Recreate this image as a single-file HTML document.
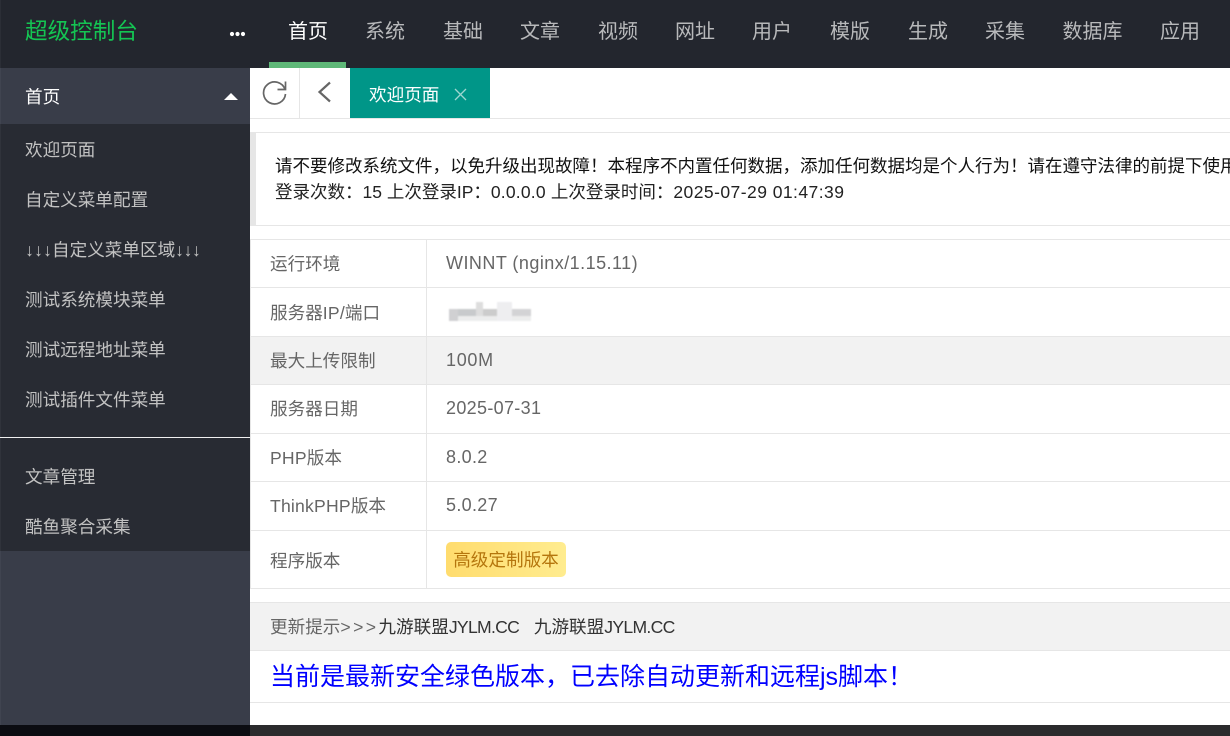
<!DOCTYPE html>
<html lang="zh"><head><meta charset="utf-8"><title>超级控制台</title>
<style>
*{box-sizing:border-box}
html,body{margin:0;padding:0;width:1230px;height:736px;overflow:hidden;background:#fff}
body{position:relative;font-family:"Liberation Sans","Noto Sans CJK SC",sans-serif;font-size:18px}
.a{position:absolute;white-space:nowrap}
.n{top:18px;height:28px;line-height:28px;font-size:20px;color:#b8b9bb;width:62px;text-align:center}
.s{left:25px;font-size:17.6px;line-height:26px;color:#c2c2c2}
.h{position:absolute;background:#e6e6e6;height:1px;left:250px;width:980px}
.k{left:270px;font-size:17.6px;line-height:26px;color:#666}
.v{left:446px;font-size:18px;line-height:26px;color:#666;letter-spacing:.32px}
.w{display:inline-block;text-align:center;font-weight:bold;font-size:17.6px}
.w1{width:9px}
.w2{width:8.4px}
.j{letter-spacing:-.7px}
.t{letter-spacing:.2px}
</style></head><body>
<div class="a" style="left:0;top:0;width:1230px;height:68px;background:#23262e"></div>
<div class="a" style="left:25px;top:15px;font-size:22.6px;line-height:34px;color:#14c553">超级控制台</div>
<svg class="a" style="left:229px;top:31px" width="17" height="6"><circle cx="3" cy="3" r="2.1" fill="#fff"/><circle cx="8.5" cy="3" r="2.1" fill="#fff"/><circle cx="14" cy="3" r="2.1" fill="#fff"/></svg>
<div class="a n" style="left:277px;color:#fff">首页</div>
<div class="a" style="left:269px;top:62px;width:77px;height:6px;background:#5fb878"></div>
<div class="a n" style="left:354px">系统</div>
<div class="a n" style="left:432px">基础</div>
<div class="a n" style="left:509px">文章</div>
<div class="a n" style="left:587px">视频</div>
<div class="a n" style="left:664px">网址</div>
<div class="a n" style="left:741px">用户</div>
<div class="a n" style="left:819px">模版</div>
<div class="a n" style="left:897px">生成</div>
<div class="a n" style="left:974px">采集</div>
<div class="a n" style="left:1062px;width:61px">数据库</div>
<div class="a n" style="left:1149px">应用</div>

<div class="a" style="left:0;top:68px;width:250px;height:657px;background:#393d49"></div>
<div class="a" style="left:0;top:124px;width:250px;height:427px;background:#282b33"></div>
<div class="a" style="left:0;top:0;width:1px;height:725px;background:rgba(255,255,255,.04)"></div>
<div class="a" style="left:25px;top:84px;font-size:17.6px;line-height:26px;color:#fff">首页</div>
<div class="a" style="left:224px;top:93px;width:0;height:0;border-left:7px solid transparent;border-right:7px solid transparent;border-bottom:7px solid #fff"></div>
<div class="a s" style="top:137px">欢迎页面</div>
<div class="a s" style="top:187px">自定义菜单配置</div>
<div class="a s" style="top:237px"><span class="w w1">↓</span><span class="w w1">↓</span><span class="w w1">↓</span>自定义菜单区域<span class="w w2">↓</span><span class="w w2">↓</span><span class="w w2">↓</span></div>
<div class="a s" style="top:287px">测试系统模块菜单</div>
<div class="a s" style="top:337px">测试远程地址菜单</div>
<div class="a s" style="top:387px">测试插件文件菜单</div>
<div class="a" style="left:0;top:437px;width:250px;height:1px;background:#f0f0f0"></div>
<div class="a s" style="top:464px">文章管理</div>
<div class="a s" style="top:514px">酷鱼聚合采集</div>

<div class="h" style="top:118px"></div>
<div class="a" style="left:299px;top:68px;width:1px;height:50px;background:#e6e6e6"></div>
<svg class="a" style="left:262px;top:79px" width="26" height="26" viewBox="0 0 26 26" fill="none" stroke="#666" stroke-width="1.7"><path d="M23 10.5A11 11 0 1 0 23.5 15"/><path d="M23.5 2.5V10.5H15.5"/></svg>
<svg class="a" style="left:316px;top:81px" width="16" height="22" viewBox="0 0 16 22" fill="none" stroke="#666" stroke-width="2.2"><path d="M14 1.5L3.5 11L14 20.5"/></svg>
<div class="a" style="left:350px;top:68px;width:140px;height:50px;background:#009688"></div>
<div class="a" style="left:369px;top:82px;font-size:17.6px;line-height:26px;color:#fff">欢迎页面</div>
<svg class="a" style="left:454px;top:88px" width="13" height="13" fill="none" stroke="#9fd6d0" stroke-width="1.3"><path d="M1 1L12 12M12 1L1 12"/></svg>

<div class="h" style="top:132px"></div>
<div class="h" style="top:225px"></div>
<div class="a" style="left:250px;top:133px;width:6px;height:92px;background:#e6e6e6"></div>
<div class="a" style="left:275px;top:153px;width:955px;overflow:hidden;font-size:17.5px;line-height:26px;color:#111">请不要修改系统文件，以免升级出现故障！本程序不内置任何数据，添加任何数据均是个人行为！请在遵守法律的前提下使用</div>
<div class="a" style="left:275px;top:179px;font-size:17.5px;line-height:26px;color:#222">登录次数：15 上次登录IP：<span style="letter-spacing:.2px">0.0.0.0 </span>上次登录时间：<span style="letter-spacing:.45px">2025-07-29 01:47:39</span></div>

<div class="a" style="left:250px;top:336px;width:980px;height:48px;background:#f2f2f2"></div>
<div class="h" style="top:239px"></div>
<div class="h" style="top:287px"></div>
<div class="h" style="top:336px"></div>
<div class="h" style="top:384px"></div>
<div class="h" style="top:433px"></div>
<div class="h" style="top:481px"></div>
<div class="h" style="top:530px"></div>
<div class="h" style="top:588px"></div>
<div class="a" style="left:250px;top:239px;width:1px;height:349px;background:#e6e6e6"></div>
<div class="a" style="left:426px;top:239px;width:1px;height:349px;background:#e6e6e6"></div>
<div class="a k" style="top:251px">运行环境</div><div class="a v" style="top:250px;letter-spacing:.46px">WINNT (nginx/1.15.11)</div>
<div class="a k" style="top:300px">服务器<span class="t">IP/</span>端口</div>
<svg class="a" style="left:449px;top:302px;filter:blur(.8px)" width="82" height="19"><rect x="0" y="7" width="82" height="12" fill="#eceded"/><rect x="0" y="7" width="9" height="12" fill="#d0d0d2"/><rect x="9" y="7" width="18" height="7" fill="#c8cacc"/><rect x="27" y="0" width="7" height="14" fill="#ddd"/><rect x="34" y="7" width="14" height="7" fill="#ccc"/><rect x="48" y="0" width="15" height="19" fill="#eeeef0"/><rect x="63" y="7" width="19" height="7" fill="#d3d3d5"/></svg>
<div class="a k" style="top:348px">最大上传限制</div><div class="a v" style="top:347px;letter-spacing:.7px">100M</div>
<div class="a k" style="top:396px">服务器日期</div><div class="a v" style="top:395px">2025-07-31</div>
<div class="a k" style="top:445px"><span class="t">PHP</span>版本</div><div class="a v" style="top:444px">8.0.2</div>
<div class="a k" style="top:493px"><span class="t">ThinkPHP</span>版本</div><div class="a v" style="top:492px">5.0.27</div>
<div class="a k" style="top:548px">程序版本</div>
<div class="a" style="left:446px;top:542px;width:120px;height:35px;border-radius:5px;background:linear-gradient(90deg,#ffdc6e,#ffec8f);color:#b5760d;font-size:17.6px;line-height:37px;text-align:center">高级定制版本</div>

<div class="a" style="left:250px;top:602px;width:980px;height:49px;background:#f2f2f2;border-top:1px solid #e6e6e6;border-bottom:1px solid #e6e6e6"></div>
<div class="a" style="left:270px;top:614px;font-size:17.6px;line-height:26px;color:#666">更新提示<span style="letter-spacing:2.4px">&gt;&gt;&gt;</span><span style="color:#333">九游联盟<span class="j">JYLM.CC</span>&nbsp;&nbsp;&nbsp;九游联盟<span class="j">JYLM.CC</span></span></div>
<div class="a" style="left:270px;top:659px;font-size:25px;line-height:36px;color:#0000ff">当前是最新安全绿色版本，已去除自动更新和远程js脚本！</div>
<div class="h" style="top:702px"></div>

<div class="a" style="left:0;top:725px;width:250px;height:11px;background:#0b0c11"></div>
<div class="a" style="left:250px;top:725px;width:980px;height:11px;background:#2b2b2d"></div>
</body></html>
